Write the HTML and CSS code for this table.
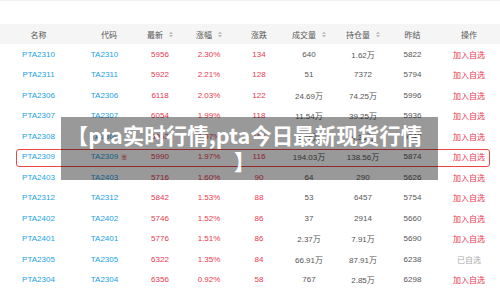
FILE: index.html
```html
<!DOCTYPE html>
<html lang="zh-CN">
<head>
<meta charset="utf-8">
<title>pta实时行情</title>
<link rel="stylesheet" href="styles.css">
</head>
<body>
<div class="page">
  <div class="table">
    <div class="row head">
      <div>名称</div>
      <div>代码</div>
      <div>最新<svg class="sort" viewBox="0 0 4 7" width="4" height="7"><polygon points="0,3 2,0.6 4,3"/><polygon points="0,4 2,6.4 4,4"/></svg></div>
      <div>涨幅<svg class="sort" viewBox="0 0 4 7" width="4" height="7"><polygon points="0,3 2,0.6 4,3"/><polygon points="0,4 2,6.4 4,4"/></svg></div>
      <div>涨跌</div>
      <div>成交量<svg class="sort" viewBox="0 0 4 7" width="4" height="7"><polygon points="0,3 2,0.6 4,3"/><polygon points="0,4 2,6.4 4,4"/></svg></div>
      <div>持仓量<svg class="sort" viewBox="0 0 4 7" width="4" height="7"><polygon points="0,3 2,0.6 4,3"/><polygon points="0,4 2,6.4 4,4"/></svg></div>
      <div>昨结</div>
      <div>操作</div>
    </div>

    <div class="row"><div class="blue">PTA2310</div><div class="blue">TA2310<span class="badge off">主</span></div><div class="red">5956</div><div class="red">2.30%</div><div class="red">134</div><div>640</div><div>1.62万</div><div>5822</div><div class="red">加入自选</div></div>
    <div class="row"><div class="blue">PTA2311</div><div class="blue">TA2311<span class="badge off">主</span></div><div class="red">5922</div><div class="red">2.21%</div><div class="red">128</div><div>51</div><div>7372</div><div>5794</div><div class="red">加入自选</div></div>
    <div class="row"><div class="blue">PTA2306</div><div class="blue">TA2306<span class="badge off">主</span></div><div class="red">6118</div><div class="red">2.03%</div><div class="red">122</div><div>24.69万</div><div>74.25万</div><div>5996</div><div class="red">加入自选</div></div>
    <div class="row"><div class="blue">PTA2307</div><div class="blue">TA2307<span class="badge off">主</span></div><div class="red">6054</div><div class="red">1.99%</div><div class="red">118</div><div>11.54万</div><div>39.25万</div><div>5936</div><div class="red">加入自选</div></div>
    <div class="row"><div class="blue">PTA2308</div><div class="blue">TA2308<span class="badge off">主</span></div><div class="red">6053</div><div class="red">1.97%</div><div class="red">117</div><div>1.46万</div><div>4.35万</div><div>5942</div><div class="red">加入自选</div></div>
    <div class="row hl"><div class="blue">PTA2309</div><div class="blue">TA2309<span class="badge">主</span></div><div class="red">5990</div><div class="red">1.97%</div><div class="red">116</div><div>194.03万</div><div>138.56万</div><div>5874</div><div class="red">加入自选</div></div>
    <div class="row"><div class="blue">PTA2403</div><div class="blue">TA2403<span class="badge off">主</span></div><div class="red">5716</div><div class="red">1.60%</div><div class="red">90</div><div>64</div><div>290</div><div>5626</div><div class="red">加入自选</div></div>
    <div class="row"><div class="blue">PTA2312</div><div class="blue">TA2312<span class="badge off">主</span></div><div class="red">5842</div><div class="red">1.53%</div><div class="red">88</div><div>53</div><div>6457</div><div>5754</div><div class="red">加入自选</div></div>
    <div class="row"><div class="blue">PTA2402</div><div class="blue">TA2402<span class="badge off">主</span></div><div class="red">5746</div><div class="red">1.52%</div><div class="red">86</div><div>37</div><div>2914</div><div>5660</div><div class="red">加入自选</div></div>
    <div class="row"><div class="blue">PTA2401</div><div class="blue">TA2401<span class="badge off">主</span></div><div class="red">5776</div><div class="red">1.51%</div><div class="red">86</div><div>2.37万</div><div>7.91万</div><div>5690</div><div class="red">加入自选</div></div>
    <div class="row"><div class="blue">PTA2305</div><div class="blue">TA2305<span class="badge off">主</span></div><div class="red">6322</div><div class="red">1.35%</div><div class="red">84</div><div>66.91万</div><div>87.91万</div><div>6238</div><div class="muted">已自选</div></div>
    <div class="row"><div class="blue">PTA2304</div><div class="blue">TA2304<span class="badge off">主</span></div><div class="red">6356</div><div class="red">0.92%</div><div class="red">58</div><div>767</div><div>2.85万</div><div>6298</div><div class="red">加入自选</div></div>
  </div>

  <div class="caption">【pta实时行情,pta今日最新现货行情<br>】</div>
</div>
</body>
</html>
```

FILE: styles.css
```css
* { box-sizing: border-box; }
html, body { margin: 0; padding: 0; background: #fff; }
body {
  font-family: "Liberation Sans", "Noto Sans CJK SC", sans-serif;
  font-size: 8px;
  color: #555;
  width: 500px;
  height: 296px;
  overflow: hidden;
}
.page {
  position: relative;
  border-top: 1px solid #f0f0f0;
  padding-top: 23px;
  height: 296px;
}
.table { display: flex; flex-direction: column; }
.row {
  display: grid;
  grid-template-columns: 77px 64px 38px 60px 40px 60px 48px 51px 62px;
  height: 20.5px;
  align-items: center;
  text-align: center;
  white-space: nowrap;
}
.row > div { display: flex; align-items: center; justify-content: center; }
.row.head { height: 20px; background: #f5f5f6; color: #555; }
.sort { fill: #bdbdbd; margin-left: 6px; }
.blue { color: #1b9fe6; }
.red { color: #e8384f; }
.muted { color: #aaa; }
.badge {
  display: inline-block;
  width: 6px;
  height: 6px;
  margin-left: 3px;
  font-size: 5px;
  line-height: 6px;
  text-align: center;
  color: #e8384f;
  background: #fbe4e7;
  border-radius: 1px;
}
.badge.off { visibility: hidden; }
.row.hl { position: relative; }
.row.hl::after {
  content: "";
  position: absolute;
  left: 16px;
  right: 10px;
  top: 2px;
  bottom: 0;
  border: 1.5px solid #f04646;
  border-radius: 3px;
  pointer-events: none;
}
.caption {
  position: absolute;
  left: 61px;
  top: 116px;
  width: 377px;
  height: 63px;
  padding: 5px 10px 0 0;
  background: rgba(0, 0, 0, 0.4);
  color: #fff;
  font-family: "Noto Sans CJK SC", "Liberation Sans", sans-serif;
  font-weight: bold;
  font-size: 21.5px;
  line-height: 26px;
  text-align: center;
  white-space: nowrap;
}
```
